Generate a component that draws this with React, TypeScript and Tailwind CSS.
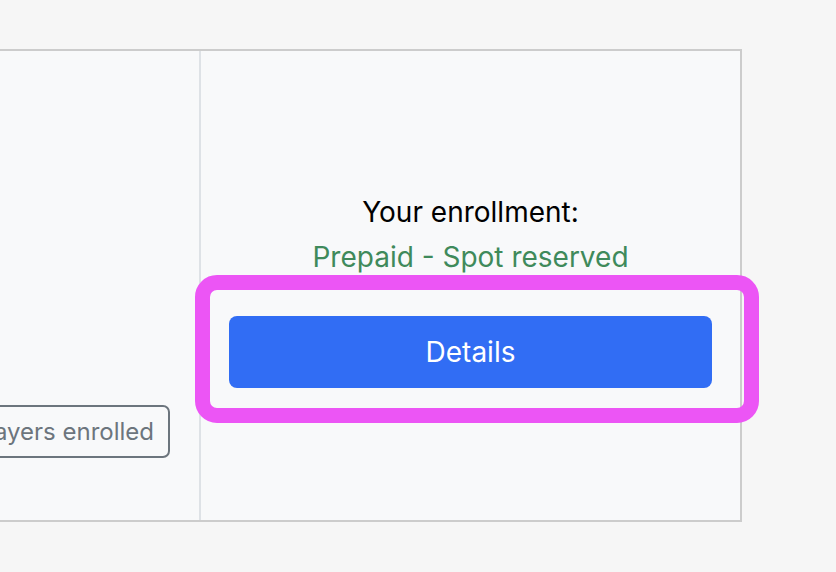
import React from "react";

export default function App() {
  return (
    <div
      className="w-[836px] h-[572px] bg-[#f6f6f6] overflow-hidden relative"
      style={{ fontFamily: "Inter, 'Noto Sans', sans-serif" }}
    >
      <div className="mt-[49px] ml-[-300px] w-[1042px] h-[473px] flex bg-[#f8f9fa] border-2 border-[#cccccc]">
        <div className="w-[499px] shrink-0 border-r-2 border-[#dee2e6] flex items-end justify-end pr-[29px] pb-[62px]">
          <div className="h-[53px] px-[14px] flex items-center border-2 border-[#6c757d] rounded-[7px] text-[#6c757d] text-[24px] whitespace-nowrap">
            Players enrolled
          </div>
        </div>
        <div className="flex-1 flex flex-col items-center justify-center px-[28px] pt-[7px]">
          <div className="text-[28px] leading-[45px] text-black">Your enrollment:</div>
          <div className="text-[28px] leading-[45px] text-[#3f8a5b]">Prepaid - Spot reserved</div>
          <div className="relative w-full mt-[36px]">
            <button className="w-full h-[72px] rounded-[8px] bg-[#316df4] text-white text-[28px]">
              Details
            </button>
            <div className="absolute left-[-34px] right-[-47px] top-[-41px] bottom-[-35px] border-[15px] border-[#ec55f5] rounded-[22px] pointer-events-none" />
          </div>
        </div>
      </div>
    </div>
  );
}
